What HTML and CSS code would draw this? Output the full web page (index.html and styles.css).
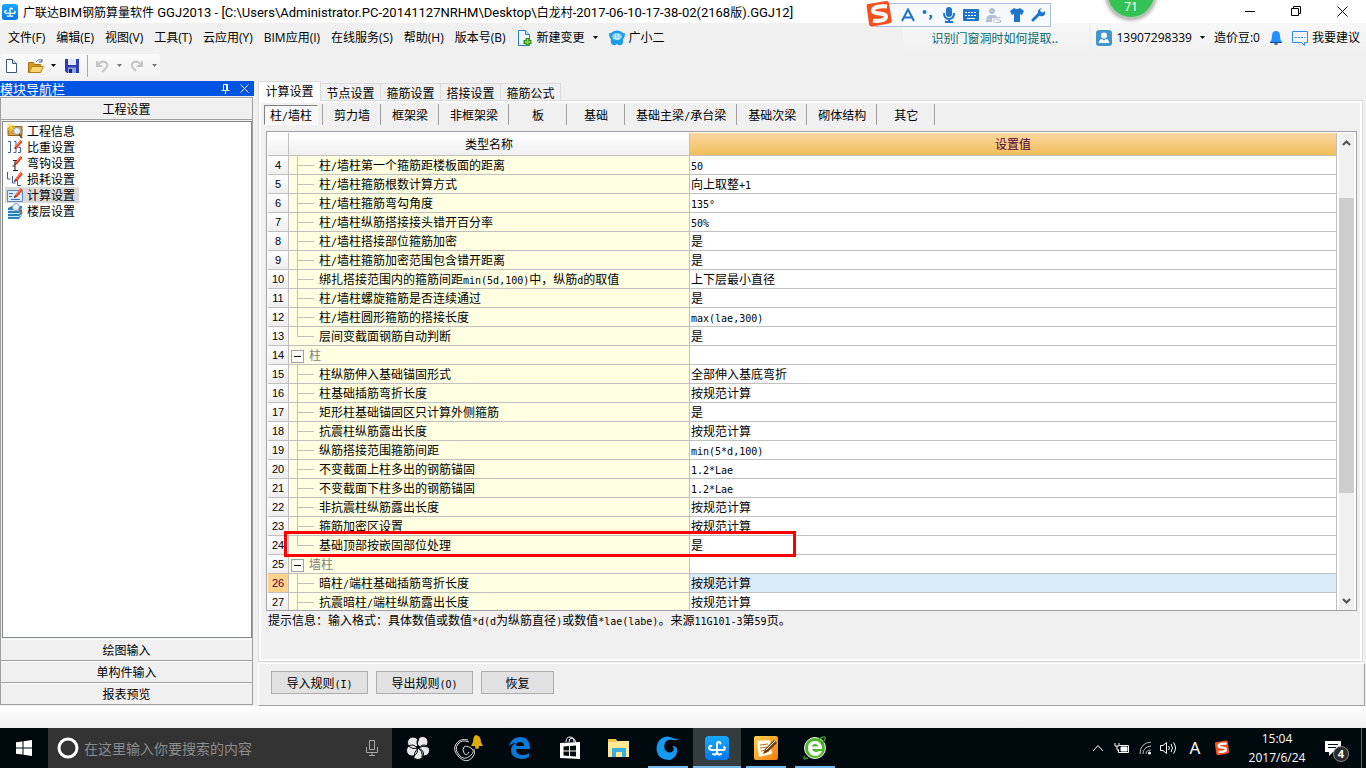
FILE: index.html
```html
<!DOCTYPE html>
<html lang="zh-CN">
<head>
<meta charset="utf-8">
<title>广联达BIM钢筋算量软件 GGJ2013</title>
<link rel="stylesheet" href="styles.css">
</head>
<body>
<svg class="defs" aria-hidden="true">
  <defs>
    <linearGradient id="blue" x1="0" y1="0" x2="0" y2="1"><stop offset="0" stop-color="#18a8ff"/><stop offset="1" stop-color="#0878e8"/></linearGradient>
    <linearGradient id="orange" x1="0" y1="0" x2="1" y2="1"><stop offset="0" stop-color="#ffd34d"/><stop offset="1" stop-color="#f27a10"/></linearGradient>
    <symbol id="app" viewBox="0 0 24 24"><rect width="24" height="24" rx="4" fill="url(#blue)"/><g fill="none" stroke="#fff" stroke-width="2" stroke-linecap="round"><path d="M15.500 7.500A1.800 1.800 0 0 0 12 7.500V16a2.500 2.500 0 0 1-4 2M6.500 10a1.500 1.500 0 0 0-1 3.500Q6 14 7 14H18a1.600 1.600 0 0 0 1-3M12 16a2.500 2.500 0 0 0 4 2"/></g></symbol>
    <symbol id="sogou" viewBox="0 0 28 28"><path d="M3 4Q1.500 4.200 1.600 6L4 24Q4.500 27 7.500 26.500L24 23.500Q27 23 26.600 20L24 3Q23.500.5 21 1Z" fill="#f4501e"/><path d="M22 6.500C16 5.500 8 7 8 10.500c0 4.500 13 1.500 13 6 0 4-8 5-13 4" fill="none" stroke="#fff" stroke-width="4"/></symbol>
    <symbol id="pen" viewBox="0 0 10 12"><path d="M1 11 2 8 7.500 1 10 3 4 10Z" fill="#e83c20"/><path d="M3 8 8 2" stroke="#ff9a78"/><path d="M1 11 1.600 9 3 10Z" fill="#222"/></symbol>
    <symbol id="caret" viewBox="0 0 5 3"><path d="M0 0h5L2.500 3Z" fill="currentColor"/></symbol>
  </defs>
</svg>

<div class="window">
  <header class="titlebar">
    <svg class="i16"><use href="#app"/></svg>
    <h1>广联达<span>BIM</span>钢筋算量软件<span> GGJ2013 - [C:\Users\Administrator.PC-20141127NRHM\Desktop\</span>白龙村<span>-2017-06-10-17-38-02(2168</span>版<span>).GGJ12]</span></h1>
    <div class="winbtns">
      <button aria-label="最小化"><svg width="11" height="11"><path d="M0 5.500h10" stroke="#000"/></svg></button>
      <button aria-label="还原"><svg width="11" height="11" fill="none" stroke="#000"><path d="M.5 2.500h7v7h-7ZM2.500 2.500v-2h7v7h-2"/></svg></button>
      <button aria-label="关闭"><svg width="11" height="11"><path d="m.5.5 10 10m0-10-10 10" stroke="#000"/></svg></button>
    </div>
  </header>

  <nav class="menubar">
    <button>文件(F)</button><button>编辑(E)</button><button>视图(V)</button><button>工具(T)</button><button>云应用(Y)</button><button>BIM应用(I)</button><button>在线服务(S)</button><button>帮助(H)</button><button>版本号(B)</button>
    <button class="withicon"><svg class="i16" viewBox="0 0 16 16"><path d="M1.500.5h7l4 4v11h-11Z" fill="#eef7ff" stroke="#2b7fc0"/><path d="M8.500.5v4h4" fill="#bfe0f8" stroke="#2b7fc0"/><path d="M10.500 8v7.500M6.500 12h8" stroke="#2d8a1a" stroke-width="4"/><path d="M10.500 9v5.500M8 12h5.500" stroke="#7ed04a" stroke-width="2"/></svg>新建变更<svg class="caret"><use href="#caret"/></svg></button>
    <button class="withicon"><svg class="i16" viewBox="0 0 16 16"><path d="M0 3q2 1 3-1 5-3 10 0 1 2 3 1 0 5-2 6 1 5-2 6-2 1-4-1-2 2-4 1-3-1-2-6-2-1-2-6Z" fill="#1d9cea"/><ellipse cx="8" cy="6.500" rx="5" ry="3.500" fill="#8bd3f8"/><path d="M6.500 4.500v2m3-2v2M5 8q3 2.500 6 0" stroke="#fff" fill="none"/></svg>广小二</button>
    <div class="account">
      <a class="tip" href="#">识别门窗洞时如何提取..</a>
      <div class="user">
        <button class="withicon"><svg class="i16" viewBox="0 0 16 16"><rect width="16" height="16" rx="3" fill="#3f97ca"/><circle cx="8" cy="5.500" r="3" fill="#fff"/><path d="M3 13q0-4 3-4l2 1.500L10 9q3 0 3 4Z" fill="#fff"/></svg><span>13907298339</span><svg class="caret"><use href="#caret"/></svg></button>
        <span class="beans">造价豆:0</span>
        <button aria-label="通知" class="bell"><svg width="14" height="16" viewBox="0 0 14 16"><path d="M7 1q4 0 4 5 0 4 2 6H1q2-2 2-6 0-5 4-5Z" fill="#2490ff"/><path d="M1 12.500h12M5 14h4M7 15V13" stroke="#124b8c"/></svg></button>
        <button class="withicon"><svg class="i16" viewBox="0 0 16 16" fill="none" stroke="#2b88ee"><path d="M.5 1.500h15v11h-3v3l-3-3h-9Z"/><path d="M3 7.500h10" stroke-dasharray="2 1"/></svg>我要建议</button>
      </div>
    </div>
  </nav>

  <div class="toolbar">
    <div class="tools">
      <button aria-label="新建"><svg class="i16" viewBox="0 0 16 16"><path d="M2.500 1.500h6l4 4v9h-10Z" fill="#fff" stroke="#3c5878"/><path d="M8.500 1.500v4h4" fill="#cfdcea" stroke="#3c5878"/></svg></button>
      <button aria-label="打开" class="split"><svg class="i16" viewBox="0 0 16 16"><path d="M.5 14.500V4.500h5l1 2h6v8Z" fill="#d59a25" stroke="#a86f12"/><path d="m1 14.500 3-6h11.500l-3 6Z" fill="#ffd66e" stroke="#b98018"/><path d="M8 4q3-4 6-1m0-2v3h-3" fill="none" stroke="#3d6c9c"/></svg><svg class="caret"><use href="#caret"/></svg></button>
      <button aria-label="保存"><svg class="i16" viewBox="0 0 16 16"><path d="M1 1h14v14H3l-2-2Z" fill="#2b3fb0"/><path d="M4 1h8v6H4Z" fill="#dfe6fa"/><path d="M4 9.500h8V15H4Z" fill="#8ea2e0"/><path d="M5 11h3v4H5Z" fill="#16257c"/></svg></button>
      <i class="sep"></i>
      <button aria-label="撤销" class="split off"><svg class="i16" viewBox="0 0 16 16"><path d="M3 3v5h5M4 7q3-5 7-3t1 6l-4 4" fill="none" stroke="#c4c4c4" stroke-width="2"/></svg><svg class="caret"><use href="#caret"/></svg></button>
      <button aria-label="重做" class="split off"><svg class="i16" viewBox="0 0 16 16"><path d="M13 3v5H8M12 7Q9 2 5 4t-1 6l3 3" fill="none" stroke="#c4c4c4" stroke-width="2"/></svg><svg class="caret"><use href="#caret"/></svg></button>
    </div>
  </div>

  <div class="work">
    <aside class="side">
      <div class="caption"><h2>模块导航栏</h2>
        <button aria-label="固定"><svg width="9" height="10" fill="none" stroke="#fff"><path d="M2.500 6V.5h4V6M5.500 0v6M.5 6.500h8M4.500 6v4"/></svg></button>
        <button aria-label="关闭"><svg width="9" height="9"><path d="m.5.5 8 8m0-8-8 8" stroke="#fff"/></svg></button>
      </div>
      <div class="modules">
        <button class="mod">工程设置</button>
        <ul class="list">
          <li><button><svg class="i16" viewBox="0 0 16 16"><path d="M3 3.500h12v9H1v-7Z" fill="#d9a23a" stroke="#8a6420"/><path d="M4 0v8M0 4h8M1 1l6 6M7 1 1 7" stroke="#ffd836"/><circle cx="10" cy="8" r="3.500" fill="#e6f2fb" stroke="#8aa0b8"/><path d="m12 11 3 4" stroke="#7a4a22" stroke-width="2"/></svg>工程信息</button></li>
          <li><button><svg class="i16" viewBox="0 0 16 16"><path d="M1 2.500h2.500v11H1M7 2.500h2v11H6.500m5-5h2v5H11" fill="none" stroke="#3f5f9c"/><use href="#pen" x="6" y="0" width="10" height="11"/></svg>比重设置</button></li>
          <li><button><svg class="i16" viewBox="0 0 16 16"><path d="M6 5.500h4M8 6v9M5.500 11H8m-2 4.500h5" fill="none" stroke="#222"/><use href="#pen" x="6" y="0" width="10" height="11"/></svg>弯钩设置</button></li>
          <li><button><svg class="i16" viewBox="0 0 16 16"><path d="M.5 1v7h3M5.500 5v7h3m2-4v6.500H14" fill="none" stroke="#3f5f9c"/><use href="#pen" x="6" y="0" width="10" height="12"/></svg>损耗设置</button></li>
          <li class="sel"><button><svg class="i16" viewBox="0 0 16 16"><path d="M.5 3.500h15v11H.5Z" fill="#dcebfa" stroke="#5f8cc0"/><path d="M2 6.500h4m-4 3h3m-1 3h9" stroke="#3870b8"/><use href="#pen" x="6" y="0" width="10" height="12"/></svg>计算设置</button></li>
          <li><button><svg class="i16" viewBox="0 0 16 16"><path d="m1 5 4-2h10v9l-3 4H1Z" fill="#2a80bc"/><path d="M1 7.500h11l3-2M1 10.500h11l3-2M1 13.500h11l3-2" fill="none" stroke="#cbe8fa"/><circle cx="9" cy="4" r="3.500" fill="#e6f2fb" stroke="#8aa0b8"/><path d="m12 6 3 4" stroke="#8a6a40" stroke-width="2"/></svg>楼层设置</button></li>
        </ul>
        <button class="mod">绘图输入</button>
        <button class="mod">单构件输入</button>
        <button class="mod">报表预览</button>
      </div>
    </aside>

    <main class="main">
      <div class="tabs"><button class="on">计算设置</button><button>节点设置</button><button>箍筋设置</button><button>搭接设置</button><button>箍筋公式</button></div>
      <section class="panel">
        <div class="subtabs"><button class="on">柱<span class="m">/</span>墙柱</button><button>剪力墙</button><button>框架梁</button><button>非框架梁</button><button>板</button><button>基础</button><button>基础主梁<span class="m">/</span>承台梁</button><button>基础次梁</button><button>砌体结构</button><button>其它</button></div>
        <div class="grid">
          <div class="view">
            <table>
              <colgroup><col class="c-no"><col class="c-name"><col></colgroup>
              <thead><tr><th></th><th>类型名称</th><th class="hot">设置值</th></tr></thead>
              <tbody>
                <tr><th>4</th><td>柱<span class="m">/</span>墙柱第一个箍筋距楼板面的距离</td><td><span class="m">50</span></td></tr>
                <tr><th>5</th><td>柱<span class="m">/</span>墙柱箍筋根数计算方式</td><td>向上取整<span class="m">+1</span></td></tr>
                <tr><th>6</th><td>柱<span class="m">/</span>墙柱箍筋弯勾角度</td><td><span class="m">135°</span></td></tr>
                <tr><th>7</th><td>柱<span class="m">/</span>墙柱纵筋搭接接头错开百分率</td><td><span class="m">50%</span></td></tr>
                <tr><th>8</th><td>柱<span class="m">/</span>墙柱搭接部位箍筋加密</td><td>是</td></tr>
                <tr><th>9</th><td>柱<span class="m">/</span>墙柱箍筋加密范围包含错开距离</td><td>是</td></tr>
                <tr><th>10</th><td>绑扎搭接范围内的箍筋间距<span class="m">min(5d,100)</span>中，纵筋<span class="m">d</span>的取值</td><td>上下层最小直径</td></tr>
                <tr><th>11</th><td>柱<span class="m">/</span>墙柱螺旋箍筋是否连续通过</td><td>是</td></tr>
                <tr><th>12</th><td>柱<span class="m">/</span>墙柱圆形箍筋的搭接长度</td><td><span class="m">max(lae,300)</span></td></tr>
                <tr class="end"><th>13</th><td>层间变截面钢筋自动判断</td><td>是</td></tr>
                <tr class="group"><th>14</th><td><button aria-label="折叠"></button>柱</td><td></td></tr>
                <tr><th>15</th><td>柱纵筋伸入基础锚固形式</td><td>全部伸入基底弯折</td></tr>
                <tr><th>16</th><td>柱基础插筋弯折长度</td><td>按规范计算</td></tr>
                <tr><th>17</th><td>矩形柱基础锚固区只计算外侧箍筋</td><td>是</td></tr>
                <tr><th>18</th><td>抗震柱纵筋露出长度</td><td>按规范计算</td></tr>
                <tr><th>19</th><td>纵筋搭接范围箍筋间距</td><td><span class="m">min(5*d,100)</span></td></tr>
                <tr><th>20</th><td>不变截面上柱多出的钢筋锚固</td><td><span class="m">1.2*Lae</span></td></tr>
                <tr><th>21</th><td>不变截面下柱多出的钢筋锚固</td><td><span class="m">1.2*Lae</span></td></tr>
                <tr><th>22</th><td>非抗震柱纵筋露出长度</td><td>按规范计算</td></tr>
                <tr><th>23</th><td>箍筋加密区设置</td><td>按规范计算</td></tr>
                <tr class="end"><th>24</th><td>基础顶部按嵌固部位处理</td><td>是</td></tr>
                <tr class="group"><th>25</th><td><button aria-label="折叠"></button>墙柱</td><td></td></tr>
                <tr class="current"><th>26</th><td>暗柱<span class="m">/</span>端柱基础插筋弯折长度</td><td>按规范计算</td></tr>
                <tr><th>27</th><td>抗震暗柱<span class="m">/</span>端柱纵筋露出长度</td><td>按规范计算</td></tr>
              </tbody>
            </table>
            <div class="mark"></div>
          </div>
          <div class="scroll">
            <button aria-label="向上"><svg width="9" height="6"><path d="m1 5 3.500-3.500L8 5" fill="none" stroke="#505050" stroke-width="2"/></svg></button>
            <div class="track"><div class="thumb"></div></div>
            <button aria-label="向下"><svg width="9" height="6"><path d="m1 1 3.500 3.500L8 1" fill="none" stroke="#505050" stroke-width="2"/></svg></button>
          </div>
        </div>
        <p class="hint">提示信息：输入格式：具体数值或数值<span class="m">*d(d</span>为纵筋直径<span class="m">)</span>或数值<span class="m">*lae(labe)</span>。来源<span class="m">11G101-3</span>第<span class="m">59</span>页。</p>
      </section>
      <footer class="actions"><button>导入规则<span class="m">(I)</span></button><button>导出规则<span class="m">(O)</span></button><button class="short">恢复</button></footer>
    </main>
  </div>
  <div class="status"></div>
</div>

<div class="taskbar">
  <button class="start" aria-label="开始"><svg width="16" height="16" viewBox="0 0 16 16" fill="#fff"><path d="M0 2.300 6.500 1.400V7.500H0ZM7.500 1.200 16 0v7.500H7.500ZM0 8.500h6.500v6.100L0 13.700ZM7.500 8.500H16V16l-8.500-1.200Z"/></svg></button>
  <label class="search"><svg width="22" height="22"><circle cx="11" cy="11" r="9" fill="none" stroke="#fff" stroke-width="3"/></svg><input type="text" placeholder="在这里输入你要搜索的内容" aria-label="搜索"><svg width="12" height="18" fill="none" stroke="#a8a8a8"><path d="M3.500 1.500h5v9h-5ZM.5 8v5.500h11V8M6 13.500v3M3 16.500h6"/></svg></label>
  <div class="apps">
    <button class="wide" aria-label="应用"><svg class="i24" viewBox="0 0 24 24"><g fill="#e8e8e8" stroke="#00090d"><circle cx="7" cy="6.500" r="5.500"/><circle cx="16.500" cy="6" r="5.500"/><circle cx="18" cy="14.500" r="5.500"/><circle cx="12" cy="18" r="5.500"/><circle cx="6" cy="14.500" r="5.500"/><path d="M12 12Q7 14 2 10M12 12Q10 8 13 2M12 12q5-3 10-1M12 12q5 3 4 9M12 12q-4 4-4 9" fill="none"/></g></svg></button>
    <button class="wide" aria-label="提醒"><svg width="30" height="28" viewBox="0 0 30 28"><g fill="none" stroke="#d8d8d8"><path d="M15 8Q8 5 4 10T5 21t11 1 1-8-7-1 0 6 5-1"/><path d="M14 6Q6 4 2 10t3 13 13 1q4-4 2-9"/></g><path d="M22 1q5 1 5 7l2 4H17l2-4q0-6 3-7Z" fill="#e2ac08"/><circle cx="23" cy="13" r="2" fill="#e2ac08"/></svg></button>
    <button class="wide" aria-label="Edge"><svg class="i24" viewBox="0 0 24 24"><path d="M1 11Q3 1 12 1q10 0 10 12H8q0 6 7 6 4 0 6-2v4q-3 2-8 2Q3 22 3 14q0-5 5-7-5 0-7 4ZM8 10h8q0-4-4-4t-4 4Z" fill="#0b78d7" fill-rule="evenodd"/></svg></button>
    <button aria-label="应用商店"><svg class="i24" viewBox="0 0 24 24"><path d="M8 6q0-5 4-5t4 5M11 6q0-4 3-4t4 5" fill="none" stroke="#fff"/><path d="m2 7 20-1v17L2 22Z" fill="#fff"/><path d="M5.500 10.500 11 10v4.500H5.500ZM12 10l6-.5v5h-6ZM5.500 15.500H11V20l-5.500-.5ZM12 15.500h6v5l-6-.5Z" fill="#00090d"/></svg></button>
    <button aria-label="文件资源管理器"><svg class="i24" viewBox="0 0 24 24"><path d="M1 3h8l1 2h12v16H1Z" fill="#ffe793"/><path d="M1 3h8v3H1Z" fill="#f5c84a"/><path d="M5 12h14v9h-4v-5H9v5H5Z" fill="#35aee4"/></svg></button>
    <button class="run" aria-label="广联达"><svg class="i24" viewBox="0 0 24 24"><path d="M24 3q-4 2-7 1-6-1-8 3-2 5 1 8 4 3 7 0 2-3-1-5 6 0 5 6-1 5-5 7l-2 1Q3 24 1 16-1 7 6 2q5-3 11 0 4 2 7 1Z" fill="#1699ef"/></svg></button>
    <button class="run active" aria-label="广联达BIM"><svg class="i24"><use href="#app"/></svg></button>
    <button class="run" aria-label="记事"><svg class="i24" viewBox="0 0 24 24"><rect width="24" height="24" rx="2" fill="url(#orange)"/><path d="m3 5 13-1 2 14-13 3Z" fill="#fffbe8"/><path d="m6 9 8-1M6 12l7-1M7 15l5-1" stroke="#b0742a"/><path d="m9 18 2-5 9-9 3 3-9 9Z" fill="#7a3c12"/><path d="m12 14 9-9" stroke="#fff" stroke-width="1"/></svg></button>
    <button class="run" aria-label="浏览器"><svg class="i24" viewBox="0 0 24 24"><circle cx="12" cy="12" r="10.500" fill="#4eb52a" stroke="#e9f9df"/><path d="M5 12Q5 5 12 5t7 8H9q1 3 4 3 2 0 3-1h3q-2 5-7 5-7-1-7-8ZM9 10.500h6Q15 8 12 8t-3 2.500Z" fill="#fff" fill-rule="evenodd"/><path d="M2 20q-3 4 3 2M16 3q7-4 6 0-1 3-4 5" fill="none" stroke="#3c9a20" stroke-width="1.500"/></svg></button>
  </div>
  <div class="tray">
    <svg class="more" width="12" height="8"><path d="m1 7 5-5.500L11 7" fill="none" stroke="#fff"/></svg>
    <svg width="16" height="12" fill="none" stroke="#fff"><path d="M5.500 3.500h9v7H4.500V8M1 1v3h4V1M3 4v4h2"/><path d="M7 5h6v4H7Z" fill="#fff"/></svg>
    <svg width="14" height="14" fill="none" stroke="#b8bcbe"><path d="M2 13Q2 2 13 1M5 13q0-7 8-8M8 13q0-4 5-4" /><circle cx="11.500" cy="12" r="1.500" fill="#fff" stroke="none"/></svg>
    <svg width="16" height="14" fill="none" stroke="#fff"><path d="M.5 4.500H3l3.500-3v11L3 9.500H.5ZM8.500 5q2 2 0 4M11 3q3 4 0 8M13.500 1.500q4 5.500 0 11"/></svg>
    <span class="ime">A</span>
    <svg class="i16"><use href="#sogou"/></svg>
    <div class="clock"><time>15:04</time><time>2017/6/24</time></div>
    <button class="notes" aria-label="操作中心"><svg width="17" height="17"><path d="M0 1h16v11h-8l-4 4v-4H0Z" fill="#fff"/><path d="M3 4.500h10M3 7.500h8" stroke="#00090d"/></svg><b>4</b></button>
    <i class="peek"></i>
  </div>
</div>

<div class="imebar">
  <svg class="logo" viewBox="0 0 28 28"><use href="#sogou"/></svg>
  <svg width="14" height="14" fill="none" stroke="#1f74c8" stroke-width="2"><path d="M1 13 7 1.500 13 13M3.500 9.500h7"/></svg>
  <svg width="12" height="12" fill="#1f74c8"><circle cx="2.500" cy="3" r="2"/><path d="M7 6h3q1 3-2 5l-1-1 1-2Z"/></svg>
  <svg width="14" height="16" fill="none" stroke="#1f74c8" stroke-width="2"><rect x="4" y="0" width="6" height="10" rx="3" fill="#1f74c8" stroke="none"/><path d="M2 6q0 6 5 6t5-6M7 12v3M3 15h8"/></svg>
  <svg width="16" height="12"><rect width="16" height="12" rx="1" fill="#1f74c8"/><path d="M2 3.500h12M2 6.500h12" stroke="#fff" stroke-dasharray="2 1"/><path d="M4 9.500h8" stroke="#fff"/></svg>
  <svg width="16" height="15" fill="#b4bfd2"><circle cx="6" cy="3" r="3"/><path d="M0 14q0-7 4-7h4q3 0 3 3H6v4Z"/><path d="M8 9v6M15 9.500h-4V12h3.500v2.500H10" fill="none" stroke="#b4bfd2"/></svg>
  <svg width="14" height="14" fill="#1f74c8"><path d="M4 0q3 2 6 0l4 3-2 4-2-1v8H4V6L2 7 0 3Z"/></svg>
  <svg width="14" height="14"><path d="M2 12 8 6" stroke="#1f74c8" stroke-width="3" stroke-linecap="round"/><path d="M11 0 9 2l1 2 2 .5L14 3q1 4-2 5-4 1-5-2-1-5 4-6Z" fill="#1f74c8"/></svg>
</div>
<div class="ball">71</div>
</body>
</html>
```
FILE: styles.css
```css
* { box-sizing: border-box; }
body {
  margin: 0;
  height: 100vh;
  display: flex;
  flex-direction: column;
  overflow: hidden;
  position: relative;
  background: #f0f0f0;
  color: #000;
  font: 12px/18px "Noto Sans CJK SC", sans-serif;
}
button { font: inherit; color: inherit; background: none; border: 0; padding: 0; margin: 0; white-space: nowrap; }
svg { flex: none; display: block; }
h1, h2, p, ul { margin: 0; padding: 0; font: inherit; list-style: none; }
.defs { position: absolute; width: 0; height: 0; }
.i16 { width: 16px; height: 16px; }
.i24 { width: 24px; height: 24px; }
.caret { width: 5px; height: 3px; }
.m { font-family: "DejaVu Sans Mono", monospace; font-size: 10px; line-height: 1; }

.window { flex: 1; min-height: 0; display: flex; flex-direction: column; }
.titlebar { flex: none; height: 23px; padding-left: 2px; display: flex; align-items: center; gap: 5px; background: #fff; }
.titlebar h1 { flex: 1; white-space: pre; }
.titlebar h1 span { font-family: Roboto, sans-serif; font-size: 13px; line-height: 1; }
.winbtns { display: flex; padding-right: 1px; }
.winbtns button { width: 46px; height: 20px; display: flex; align-items: center; justify-content: center; }

.menubar { flex: none; height: 29px; padding-left: 8px; display: flex; align-items: center; gap: 11px; font-family: "Open Sans", "Noto Sans CJK SC", sans-serif; }
.withicon { display: flex; align-items: center; gap: 4px; }
.withicon .caret { margin-left: 4px; }
.account { flex: 1; display: flex; justify-content: flex-end; gap: 2px; }
.tip, .user { height: 29px; background: linear-gradient(#f8f8f8, #f0f0f0); display: flex; align-items: center; }
.tip { width: 186px; padding-left: 28px; color: #0a6a6c; text-decoration: none; font-family: "Noto Sans CJK SC", sans-serif; }
.user { padding: 0 6px 0 5px; gap: 9px; }
.beans { white-space: nowrap; }

.toolbar { flex: none; height: 29px; padding-top: 2px; display: flex; align-items: flex-start; }
.tools { width: 160px; height: 23px; padding-left: 4px; display: flex; align-items: center; gap: 8px; background: linear-gradient(#fbfbfb, #f2f2f2); border-radius: 3px; }
.split { display: flex; align-items: center; gap: 7px; }
.off { color: #777; }
.sep { width: 1px; height: 22px; margin: 0 -2px 0 -1px; background: #a8a8a8; }
.off + .off { margin-left: -1px; }

.work { flex: 1; min-height: 0; display: flex; gap: 4px; }
.side { width: 254px; display: flex; flex-direction: column; }
.caption { height: 15px; display: flex; align-items: center; gap: 10px; padding-right: 5px; background: #0054e3; color: #fff; line-height: 15px; }
.caption h2 { flex: 1; font-size: 13px; line-height: 14px; }
.modules { flex: 1; min-height: 0; margin: 1px 1px 1px 0; border: 1px solid #a0a0a0; border-bottom: 0; display: flex; flex-direction: column; }
.mod { flex: none; height: 22px; border-bottom: 1px solid #a0a0a0; border-top: 1px solid #fff; line-height: 20px; }
.list { flex: 1; margin: 1px 0 1px 1px; padding: 1px 2px; background: #fff; border: 1px solid #828790; }
.list button { height: 16px; padding: 0 4px 0 2px; display: flex; align-items: center; gap: 4px; line-height: 16px; }
.sel button { background: #d9d9d9; }

.main { flex: 1; min-width: 0; display: flex; flex-direction: column; }
.tabs { display: flex; align-items: flex-end; height: 19px; }
.tabs button { height: 17px; width: 60px; border: 1px solid #dcdcdc; border-left: 0; border-bottom: 0; line-height: 15px; }
.tabs .on { width: 63px; height: 20px; background: #fff; border-left: 1px solid #dcdcdc; line-height: 16px; margin-bottom: -1px; padding-bottom: 2px; position: relative; }
.panel { flex: 1; min-height: 0; margin-right: 3px; padding: 0 5px; border: 1px solid #dcdcdc; box-shadow: inset 0 0 0 2px #fff; display: flex; flex-direction: column; }
.subtabs { display: flex; flex: none; padding-top: 3px; height: 30px; }
.subtabs button { height: 21px; min-width: 58px; padding: 0 10px 0 11px; border-right: 1px solid #a0a0a0; line-height: 18px; }
.subtabs .on { min-width: 54px; height: 20px; padding: 0 5px; margin: 1px 4px 0 0; border: 1px solid #808080; border-right-color: #fff; border-bottom-color: #fff; background: #f8f8f8; }
.subtabs .on + button { border-left: 1px solid #a0a0a0; min-width: 59px; }
.grid { flex: 1; min-height: 0; margin-left: 2px; border: 1px solid #a0a0a8; background: #fff; padding: 1px 1px 0; display: flex; gap: 2px; }
.view { flex: 1; min-width: 0; overflow: hidden; position: relative; }
table { width: 100%; border-spacing: 0; table-layout: fixed; }
.c-no { width: 21px; }
.c-name { width: 401px; }
th, td { height: 19px; padding: 0; border-right: 1px solid #c0c0c0; border-bottom: 1px solid #c0c0c0; line-height: 18px; font-weight: 400; white-space: nowrap; }
thead th { height: 23px; background: linear-gradient(#fff, #f0f0f0); }
thead .hot { background: linear-gradient(#fad7a0, #f2be5c); color: #50003c; }
tbody th { background: linear-gradient(#fff, #eee); font: 11px/18px "Liberation Sans", sans-serif; }
tbody td { padding-left: 1px; }
tbody td:nth-child(2) {
  padding-left: 30px;
  background: linear-gradient(#c0c0c0, #c0c0c0) 8px 0 / 1px 100% no-repeat, linear-gradient(#c0c0c0, #c0c0c0) 8px 9px / 17px 1px no-repeat, #ffffe1;
}
tbody .end td:nth-child(2) { background-size: 1px 9px, 17px 1px, auto; }
tbody .group td:nth-child(2) { padding-left: 2px; color: #808080; background: #ffffe1; }
.group button { width: 13px; height: 13px; margin-right: 5px; border: 1px solid #a0a0a0; background: linear-gradient(#000, #000) 2px 5px / 7px 1px no-repeat, #fff; vertical-align: middle; }
.current th { background: #ffd28c; color: #50003c; }
.current td:last-child { background: #d9eaf8; }
.mark { position: absolute; left: 16px; top: 398px; width: 512px; height: 26px; border: 3px solid #f00; }
.scroll { width: 16px; background: #f0f0f0; display: flex; flex-direction: column; border-right: 1px solid #fff; }
.scroll button { height: 19px; display: flex; align-items: center; justify-content: center; }
.track { flex: 1; display: flex; flex-direction: column; padding-top: 46px; }
.thumb { height: 75%; background: #cdcdcd; }
.hint { flex: none; height: 50px; padding: 0 0 0 4px; white-space: nowrap; }
.actions { flex: none; height: 43px; margin-top: 1px; margin-right: 1px; padding: 7px 12px; display: flex; gap: 8px; border: 1px solid #a0a0a0; border-left-color: #fff; border-top-color: #fff; }
.actions button { width: 97px; height: 23px; background: #e1e1e1; border: 1px solid #adadad; line-height: 20px; }
.actions .short { width: 73px; }
.status { flex: none; height: 22px; background: linear-gradient(#fff, #f0f0f0); }

.taskbar { flex: none; height: 40px; display: flex; background: #00090d; color: #fff; }
.start { width: 48px; display: flex; align-items: center; justify-content: center; }
.search { width: 344px; display: flex; align-items: center; gap: 5px; padding: 0 14px 0 9px; background: #333; }
.search input { flex: 1; min-width: 0; border: 0; background: none; padding: 0; color: #fff; font: 14px/20px "Noto Sans CJK SC", sans-serif; }
.search input::placeholder { color: #8c8c8c; opacity: 1; }
.apps { flex: 1; display: flex; gap: 1px; padding-left: 1px; }
.apps button { width: 48px; display: flex; align-items: center; justify-content: center; }
.apps .wide { width: 50px; }
.run { background: linear-gradient(#76b9ed, #76b9ed) 50% 100% / 40px 2px no-repeat; }
.apps .active { background: linear-gradient(#76b9ed, #76b9ed) 50% 100% / 48px 2px no-repeat, #343c3e; }
.tray { display: flex; align-items: center; gap: 8px; }
.more { margin-right: 2px; }
.ime { width: 22px; text-align: center; font: 17px/20px "Noto Sans", sans-serif; }
.clock { width: 78px; display: flex; flex-direction: column; align-items: center; font: 12px/19px "Open Sans", sans-serif; }
.notes { position: relative; margin-left: 1px; }
.notes b { position: absolute; left: 8px; top: 6px; width: 16px; height: 16px; border-radius: 8px; border: 1px solid #888; background: #2b2b2b; font: 700 11px/14px "Open Sans", sans-serif; }
.peek { width: 1px; height: 40px; margin: 0 4px 0 11px; background: #666; }

.imebar { position: absolute; top: 3px; right: 315px; width: 176px; height: 24px; padding: 0 5px 0 25px; display: flex; align-items: center; justify-content: space-between; background: #f6faff; border: 1px solid #a9c0dc; }
.imebar .logo { position: absolute; left: -11px; top: -4px; width: 28px; height: 28px; }
.ball { position: absolute; right: 210px; top: -31px; width: 50px; height: 50px; border-radius: 25px; border: 2px solid #b8c4b8; background: #34c254; box-shadow: 0 1px 4px #999; color: #fff; font: 12px/72px "Noto Sans", sans-serif; text-align: center; }
```
